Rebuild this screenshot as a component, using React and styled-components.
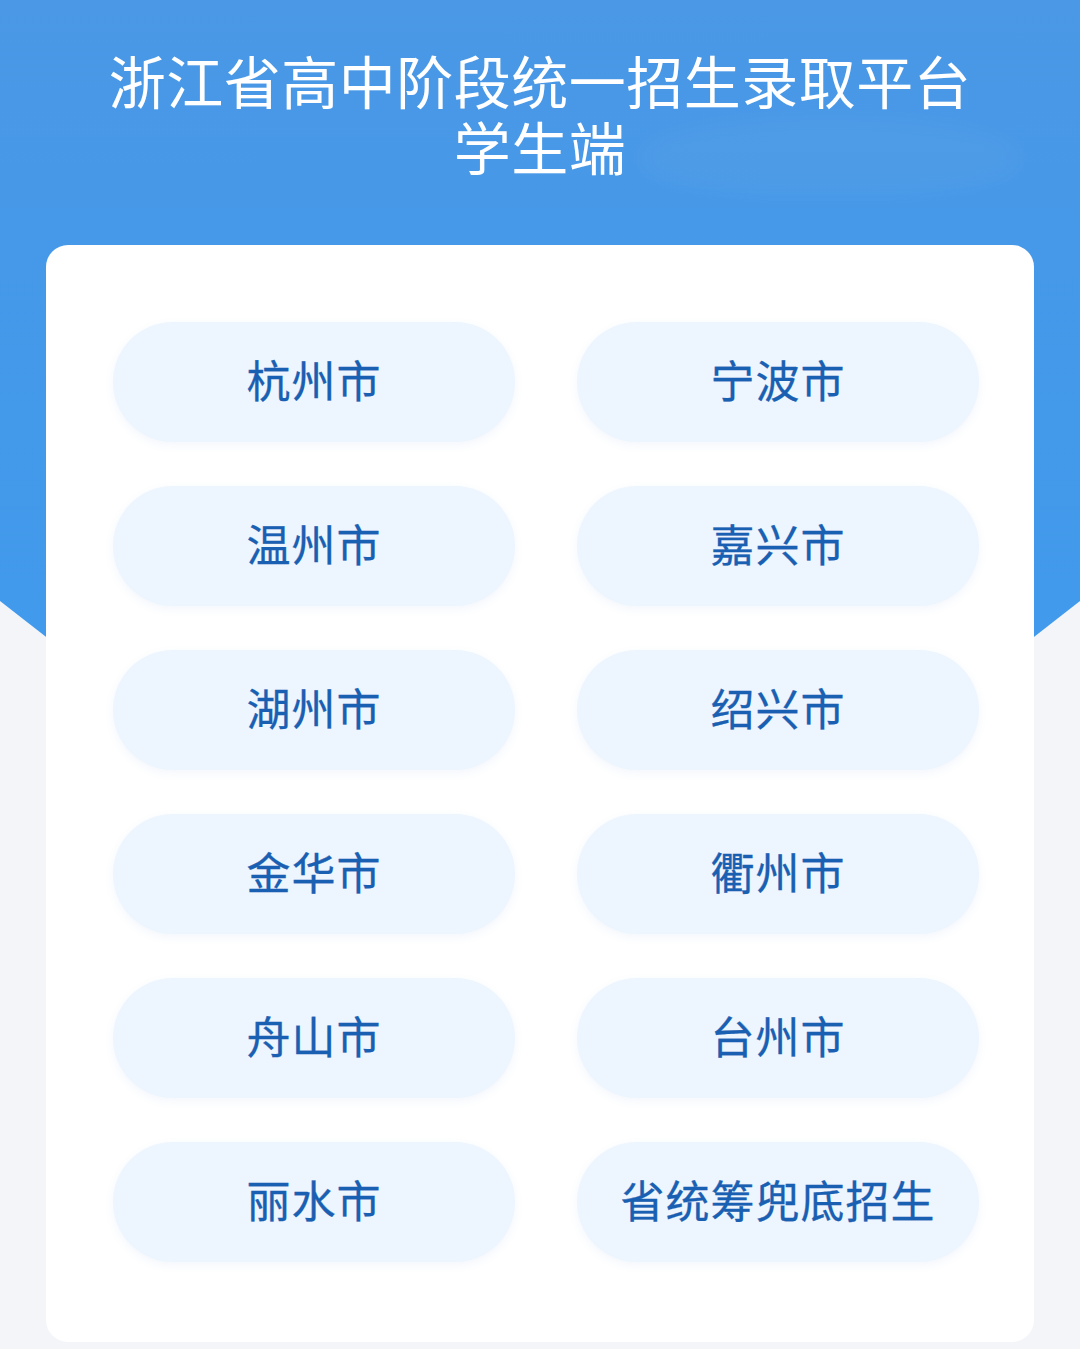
import React from "react";
import styled, { createGlobalStyle } from "styled-components";

const Global = createGlobalStyle`
  html, body { margin: 0; padding: 0; }
  body { background: #f3f5f9; font-family: "Noto Sans CJK SC", "Noto Sans", sans-serif; }
`;

const Page = styled.div`
  position: relative;
  width: 1080px;
  min-height: 1349px;
  background: #f3f5f9;
  overflow: hidden;
  &::before {
    content: "";
    position: absolute;
    left: 0; top: 0;
    width: 1080px;
    height: 1050px;
    background: linear-gradient(180deg, #4a98e6 0%, #4399ea 40%, #3f9cf0 100%);
    clip-path: polygon(0 0, 100% 0, 100% 601px, 50% 1022px, 0 601px);
    z-index: 0;
  }
`;

const Header = styled.header`
  position: relative;
  z-index: 1;
  height: 245px;
  box-sizing: border-box;
  padding-top: 46px;
  display: flex;
  flex-direction: column;
  align-items: center;
  &::after {
    content: "";
    position: absolute;
    right: 60px;
    top: 115px;
    width: 380px;
    height: 80px;
    border-radius: 50% 50% 40% 40%;
    background: rgba(255, 255, 255, 0.035);
    filter: blur(10px);
    pointer-events: none;
  }
`;

const TitleLine = styled.h1`
  margin: 0;
  height: 66px;
  display: flex;
  align-items: center;
  color: #ffffff;
  font-size: 57px;
  line-height: 1;
  font-weight: 400;
  letter-spacing: 0.5px;
`;

const Card = styled.main`
  position: relative;
  z-index: 1;
  margin: 0 46px;
  min-height: 1097px;
  box-sizing: border-box;
  background: #ffffff;
  border-radius: 22px;
  padding: 77px 55px 60px 67px;
  display: grid;
  grid-template-columns: 402px 402px;
  column-gap: 62px;
  row-gap: 44px;
  align-content: start;
`;

const CityButton = styled.button`
  height: 120px;
  border: none;
  border-radius: 60px;
  background: #edf5fe;
  box-shadow: 0 3px 10px rgba(70, 130, 210, 0.07);
  color: #1a60b2;
  font-family: "Noto Sans CJK SC", "Noto Sans", sans-serif;
  font-size: 44px;
  font-weight: 400;
  line-height: 1;
  letter-spacing: 1px;
  cursor: pointer;
  padding: 0 0 6px;
  -webkit-text-stroke: 0.3px #1a60b2;
`;

const cities = [
  "杭州市", "宁波市",
  "温州市", "嘉兴市",
  "湖州市", "绍兴市",
  "金华市", "衢州市",
  "舟山市", "台州市",
  "丽水市", "省统筹兜底招生",
];

export default function App() {
  return (
    <Page>
      <Global />
      <Header>
        <TitleLine>浙江省高中阶段统一招生录取平台</TitleLine>
        <TitleLine>学生端</TitleLine>
      </Header>
      <Card>
        {cities.map(c => (
          <CityButton key={c}>{c}</CityButton>
        ))}
      </Card>
    </Page>
  );
}
